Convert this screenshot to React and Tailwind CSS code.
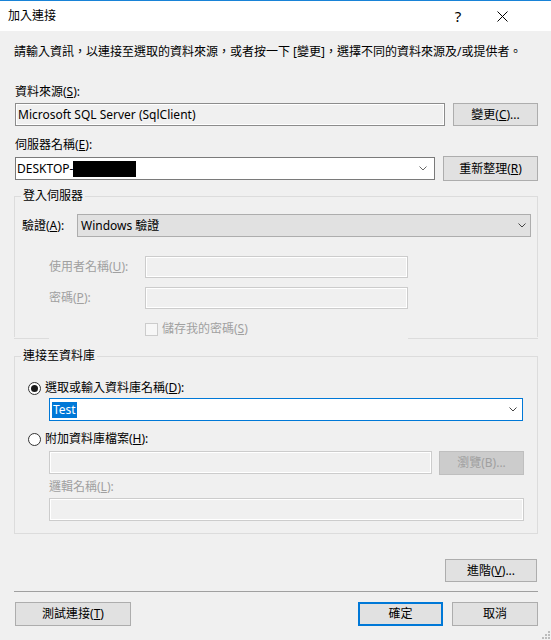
import React from "react";

const Chevron = ({ color = "#555" }) => (
  <svg width="8" height="5" viewBox="0 0 8 5" className="shrink-0">
    <path d="M0.5 0.5 L4 4 L7.5 0.5" stroke={color} strokeWidth="1" fill="none" />
  </svg>
);

const Btn = ({ className = "", children }) => (
  <div
    className={
      "flex items-center justify-center bg-[#e1e1e1] border border-[#adadad] text-black " +
      className
    }
  >
    {children}
  </div>
);

export default function App() {
  return (
    <div className="relative w-[551px] h-[640px] bg-[#f0f0f0] text-[12px] leading-[16px] text-black flex flex-col font-['Noto_Sans','Noto_Sans_CJK_TC',sans-serif] overflow-hidden">
      {/* title bar */}
      <div className="h-[31px] bg-white border-t border-[#1883d7] flex items-center shrink-0">
        <div className="pl-[8px]">加入連接</div>
        <div className="ml-auto w-[30px] text-center text-[15px] leading-[16px]">?</div>
        <div className="ml-[14px] mr-[34px] w-[30px] flex justify-center">
          <svg width="11" height="11" viewBox="0 0 11 11">
            <path d="M0.5 0.5 L10.5 10.5 M10.5 0.5 L0.5 10.5" stroke="#000" strokeWidth="1" />
          </svg>
        </div>
      </div>

      <div className="flex flex-col pl-[14px] pr-[13px]">
        <div className="mt-[13px]">
          請輸入資訊，以連接至選取的資料來源，或者按一下 [變更]，選擇不同的資料來源及/或提供者。
        </div>

        <div className="mt-[24px] pl-[1px]">
          資料來源(<u>S</u>):
        </div>
        <div className="mt-[3px] flex items-start">
          <div className="ml-[1px] w-[430px] h-[23px] border border-[#8c8c8c] shadow-[inset_0_0_0_1px_#ffffff] bg-[#f0f0f0] flex items-center pl-[2px]">
            Microsoft SQL Server (SqlClient)
          </div>
          <Btn className="ml-auto w-[85px] h-[23px]">
            變更(<u>C</u>)...
          </Btn>
        </div>

        <div className="mt-[11px] pl-[1px]">
          伺服器名稱(<u>E</u>):
        </div>
        <div className="mt-[3px] h-[25px] flex items-center">
          <div className="ml-[1px] w-[420px] h-[23px] border border-[#7a7a7a] bg-white flex items-center pl-[1px] pr-[7px]">
            <span>DESKTOP-</span>
            <span className="inline-block w-[63px] h-[16px] bg-black"></span>
            <span className="ml-auto">
              <Chevron color="#666" />
            </span>
          </div>
          <Btn className="ml-auto w-[95px] h-[25px]">
            重新整理(<u>R</u>)
          </Btn>
        </div>

        {/* group 1 */}
        <div className="mt-[15px] flex flex-col">
          <div className="border-t border-l border-r border-[#dcdcdc] flex flex-col">
            <div className="-mt-[9px] ml-[6px] w-fit px-[2px] bg-[#f0f0f0]">登入伺服器</div>
            <div className="mt-[10px] flex items-center">
              <div className="pl-[7px] w-[62px]">
                驗證(<u>A</u>):
              </div>
              <div className="w-[454px] h-[23px] bg-[#e1e1e1] border border-[#adadad] flex items-center pl-[3px] pr-[4px]">
                <span>Windows 驗證</span>
                <span className="ml-auto">
                  <Chevron color="#444" />
                </span>
              </div>
            </div>
            <div className="mt-[19px] flex items-center">
              <div className="pl-[34px] w-[130px] text-[#a0a0a0]">
                使用者名稱(<u>U</u>):
              </div>
              <div className="w-[263px] h-[22px] border border-[#cccccc] shadow-[inset_0_0_0_1px_#ffffff] bg-[#f0f0f0]"></div>
            </div>
            <div className="mt-[9px] flex items-center">
              <div className="pl-[34px] w-[130px] text-[#a0a0a0]">
                密碼(<u>P</u>):
              </div>
              <div className="w-[263px] h-[22px] border border-[#cccccc] shadow-[inset_0_0_0_1px_#ffffff] bg-[#f0f0f0]"></div>
            </div>
            <div className="mt-[12px] h-[16px] flex items-center pl-[130px]">
              <div className="w-[13px] h-[13px] border border-[#cccccc] bg-[#f7f7f7]"></div>
              <div className="ml-[4px] text-[#a0a0a0]">
                儲存我的密碼(<u>S</u>)
              </div>
            </div>
          </div>
          <div className="h-[1px] flex mt-[1px]">
            <div className="w-[35px] h-[1px] bg-[#dcdcdc]"></div>
            <div className="ml-auto w-[130px] h-[1px] bg-[#dcdcdc]"></div>
          </div>
        </div>

        {/* group 2 */}
        <div className="mt-[17px] border border-[#dcdcdc] flex flex-col pb-[12px]">
          <div className="-mt-[9px] ml-[6px] w-fit px-[2px] bg-[#f0f0f0]">連接至資料庫</div>
          <div className="mt-[16px] h-[16px] flex items-center pl-[13px]">
            <div className="w-[13px] h-[13px] rounded-full border border-[#333333] bg-white flex items-center justify-center">
              <div className="w-[7px] h-[7px] rounded-full bg-[#1a1a1a]"></div>
            </div>
            <div className="ml-[4px]">
              選取或輸入資料庫名稱(<u>D</u>):
            </div>
          </div>
          <div className="mt-[2px] ml-[34px] w-[474px] h-[23px] border border-[#0078d7] bg-white flex items-center pl-[2px] pr-[5px]">
            <span className="bg-[#0078d7] text-white px-[1px]">Test</span>
            <span className="ml-auto">
              <Chevron color="#444" />
            </span>
          </div>
          <div className="mt-[10px] h-[16px] flex items-center pl-[13px]">
            <div className="w-[13px] h-[13px] rounded-full border border-[#333333] bg-white"></div>
            <div className="ml-[4px]">
              附加資料庫檔案(<u>H</u>):
            </div>
          </div>
          <div className="mt-[4px] ml-[34px] flex items-start">
            <div className="w-[383px] h-[23px] border border-[#cccccc] shadow-[inset_0_0_0_1px_#ffffff] bg-[#f0f0f0]"></div>
            <div className="ml-[7px] w-[85px] h-[24px] bg-[#cccccc] border border-[#bfbfbf] flex items-center justify-center text-[#a0a0a0]">
              瀏覽(B)...
            </div>
          </div>
          <div className="mt-[4px] ml-[34px] text-[#a0a0a0]">
            邏輯名稱(<u>L</u>):
          </div>
          <div className="mt-[3px] ml-[34px] w-[475px] h-[23px] border border-[#cccccc] shadow-[inset_0_0_0_1px_#ffffff] bg-[#f0f0f0]"></div>
        </div>

        <Btn className="mt-[25px] self-end mr-[1px] w-[92px] h-[23px]">
          進階(<u>V</u>)...
        </Btn>

        <div className="mt-[9px] h-[1px] bg-[#a0a0a0]"></div>

        <div className="mt-[10px] flex items-center">
          <Btn className="ml-[1px] w-[116px] h-[24px]">
            測試連接(<u>T</u>)
          </Btn>
          <div className="ml-auto w-[85px] h-[24px] bg-[#e1e1e1] border-2 border-[#0078d7] flex items-center justify-center">
            確定
          </div>
          <Btn className="ml-[9px] w-[86px] h-[24px]">取消</Btn>
        </div>
      </div>

      {/* resize grip */}
      <svg className="absolute right-0 bottom-0" width="10" height="10" viewBox="0 0 10 10">
        <rect x="7" y="1" width="2" height="2" fill="#bcbcbc" />
        <rect x="4" y="4" width="2" height="2" fill="#bcbcbc" />
        <rect x="7" y="4" width="2" height="2" fill="#bcbcbc" />
        <rect x="1" y="7" width="2" height="2" fill="#bcbcbc" />
        <rect x="4" y="7" width="2" height="2" fill="#bcbcbc" />
        <rect x="7" y="7" width="2" height="2" fill="#bcbcbc" />
      </svg>
    </div>
  );
}
